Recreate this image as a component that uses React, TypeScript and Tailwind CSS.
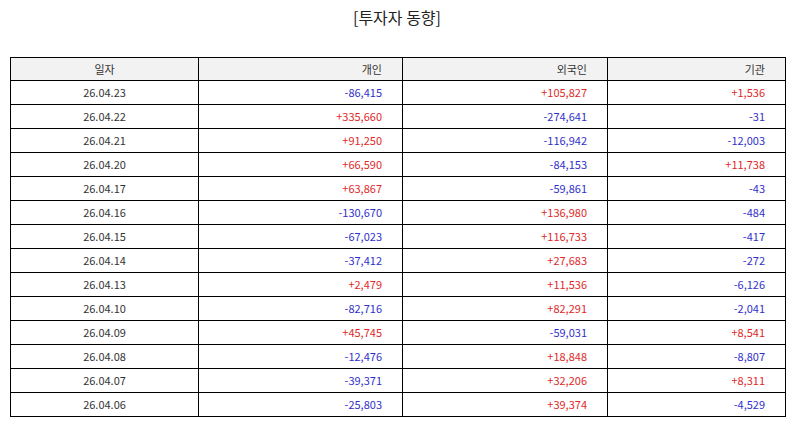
const rows: [string, string, string, string][] = [
  ["26.04.23", "-86,415", "+105,827", "+1,536"],
  ["26.04.22", "+335,660", "-274,641", "-31"],
  ["26.04.21", "+91,250", "-116,942", "-12,003"],
  ["26.04.20", "+66,590", "-84,153", "+11,738"],
  ["26.04.17", "+63,867", "-59,861", "-43"],
  ["26.04.16", "-130,670", "+136,980", "-484"],
  ["26.04.15", "-67,023", "+116,733", "-417"],
  ["26.04.14", "-37,412", "+27,683", "-272"],
  ["26.04.13", "+2,479", "+11,536", "-6,126"],
  ["26.04.10", "-82,716", "+82,291", "-2,041"],
  ["26.04.09", "+45,745", "-59,031", "+8,541"],
  ["26.04.08", "-12,476", "+18,848", "-8,807"],
  ["26.04.07", "-39,371", "+32,206", "+8,311"],
  ["26.04.06", "-25,803", "+39,374", "-4,529"],
];

const Num = ({ v }: { v: string }) => (
  <td
    className={
      "border border-black pr-[20px] text-right " +
      (v.startsWith("-") ? "text-[#3030cc]" : "text-[#e02828]")
    }
  >
    {v}
  </td>
);

export default function App() {
  return (
    <div
      className="w-[794px] h-[425px] bg-white"
      style={{ fontFamily: '"Noto Sans CJK KR", "Noto Sans", sans-serif' }}
    >
      <h1 className="pt-[5px] text-center text-[16px] leading-[24px] text-[#222]">[투자자 동향]</h1>
      <table className="ml-[10px] mt-[28px] w-[775px] table-fixed border-collapse text-[11px] text-[#333]">
        <colgroup>
          <col className="w-[188px]" />
          <col className="w-[204px]" />
          <col className="w-[205px]" />
          <col className="w-[178px]" />
        </colgroup>
        <thead>
          <tr className="h-[23px] bg-[#f2f2f2]">
            <th className="border border-black text-center font-normal">일자</th>
            <th className="border border-black pr-[20px] text-right font-normal">개인</th>
            <th className="border border-black pr-[20px] text-right font-normal">외국인</th>
            <th className="border border-black pr-[20px] text-right font-normal">기관</th>
          </tr>
        </thead>
        <tbody>
          {rows.map((r) => (
            <tr key={r[0]} className="h-[24px]">
              <td className="border border-black text-center">{r[0]}</td>
              <Num v={r[1]} />
              <Num v={r[2]} />
              <Num v={r[3]} />
            </tr>
          ))}
        </tbody>
      </table>
    </div>
  );
}
